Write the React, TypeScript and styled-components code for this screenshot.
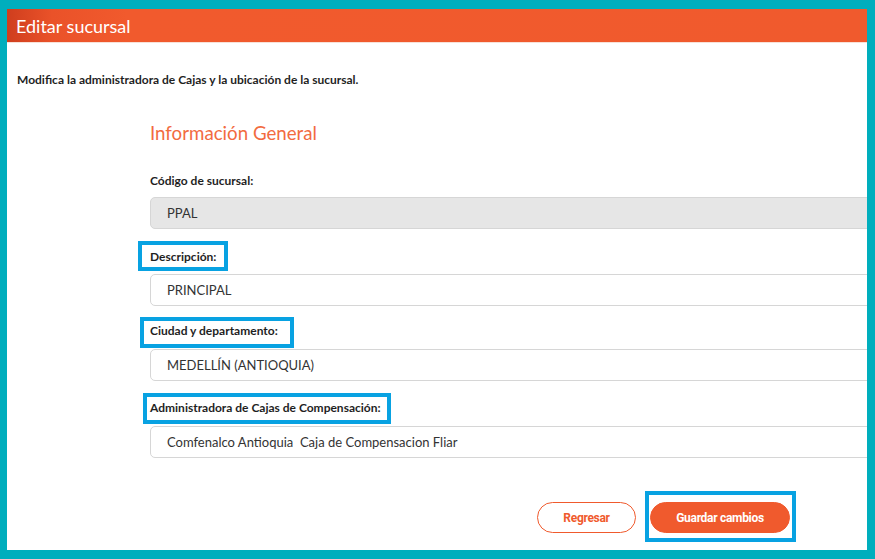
import React from 'react'
import styled, { createGlobalStyle } from 'styled-components'

const GlobalStyle = createGlobalStyle`
  html, body {
    margin: 0;
    padding: 0;
    background: #00aebd;
  }
  * {
    box-sizing: border-box;
  }
`

const Frame = styled.div`
  width: 875px;
  height: 559px;
  padding: 9px 8px 9px 7px;
  background: #00aebd;
  font-family: Lato, 'Open Sans', sans-serif;
`

const Panel = styled.div`
  height: 100%;
  background: #ffffff;
  overflow: hidden;
  display: flex;
  flex-direction: column;
`

const Header = styled.div`
  height: 34px;
  flex-shrink: 0;
  display: flex;
  align-items: center;
  padding-left: 9px;
  background: linear-gradient(90deg, #cf3e1e 0px, #ea5229 45px, #f15a2d 120px, #f05a2d 100%);
  border-bottom: 1px solid #f7e1d8;
  color: #ffffff;
  font-size: 18px;
`

const Intro = styled.p`
  margin: 29px 0 0 10px;
  font-size: 12px;
  font-weight: 700;
  color: #1f1f1f;
  line-height: 16px;
`

const Form = styled.div`
  padding-left: 143px;
  display: flex;
  flex-direction: column;
`

const SectionTitle = styled.h2`
  margin: 33px 0 0;
  font-size: 18.7px;
  font-weight: 400;
  color: #f26b3f;
  line-height: 24px;
`

const Field = styled.div<{ $top: number }>`
  margin-top: ${(p) => p.$top}px;
  display: flex;
  flex-direction: column;
  align-items: flex-start;
`

const Label = styled.span`
  position: relative;
  font-size: 12px;
  font-weight: 700;
  line-height: 16px;
  color: #1f1f1f;
`

const Marked = styled(Label)<{ $t: number; $r: number; $b: number; $l: number }>`
  &::after {
    content: '';
    position: absolute;
    top: -${(p) => p.$t}px;
    right: -${(p) => p.$r}px;
    bottom: -${(p) => p.$b}px;
    left: -${(p) => p.$l}px;
    border: 4px solid #08a2e2;
  }
`

const Input = styled.div<{ $disabled?: boolean; $gap: number }>`
  margin-top: ${(p) => p.$gap}px;
  width: 760px;
  height: 32px;
  display: flex;
  align-items: center;
  padding-left: 16px;
  border: 1px solid #d6d6d6;
  border-radius: 5px;
  background: ${(p) => (p.$disabled ? '#e6e6e6' : '#ffffff')};
  font-size: 13px;
  color: #333333;
  white-space: pre;
`

const Actions = styled.div`
  margin-top: 44px;
  padding-right: 77px;
  display: flex;
  justify-content: flex-end;
  gap: 14px;
`

const Button = styled.button<{ $primary?: boolean }>`
  position: relative;
  height: 31px;
  width: ${(p) => (p.$primary ? 140 : 99)}px;
  border-radius: 16px;
  border: 1px solid #f05a2d;
  background: ${(p) => (p.$primary ? '#f05a2d' : '#ffffff')};
  color: ${(p) => (p.$primary ? '#ffffff' : '#f05a2d')};
  font-family: Roboto, 'Liberation Sans', sans-serif;
  font-weight: 700;
  font-size: 12px;
  letter-spacing: -0.3px;
  padding: 0;
`

const ButtonMark = styled.span`
  position: absolute;
  top: -12px;
  right: -7px;
  bottom: -10px;
  left: -6px;
  border: 4px solid #08a2e2;
  pointer-events: none;
`

export default function App() {
  return (
    <>
      <GlobalStyle />
      <Frame>
        <Panel>
          <Header>Editar sucursal</Header>
          <Intro>Modifica la administradora de Cajas y la ubicación de la sucursal.</Intro>
          <Form>
            <SectionTitle>Información General</SectionTitle>
            <Field $top={28}>
              <Label>Código de sucursal:</Label>
              <Input $disabled $gap={8}>PPAL</Input>
            </Field>
            <Field $top={20}>
              <Marked $t={8} $r={12} $b={6} $l={12}>Descripción:</Marked>
              <Input $gap={9}>PRINCIPAL</Input>
            </Field>
            <Field $top={17}>
              <Marked $t={6} $r={16} $b={9} $l={10}>Ciudad y departamento:</Marked>
              <Input $gap={10}>MEDELLÍN (ANTIOQUIA)</Input>
            </Field>
            <Field $top={19}>
              <Marked $t={7} $r={10} $b={8} $l={7}>Administradora de Cajas de Compensación:</Marked>
              <Input $gap={10}>Comfenalco Antioquia  Caja de Compensacion Fliar</Input>
            </Field>
          </Form>
          <Actions>
            <Button>Regresar</Button>
            <Button $primary>
              Guardar cambios
              <ButtonMark />
            </Button>
          </Actions>
        </Panel>
      </Frame>
    </>
  )
}
